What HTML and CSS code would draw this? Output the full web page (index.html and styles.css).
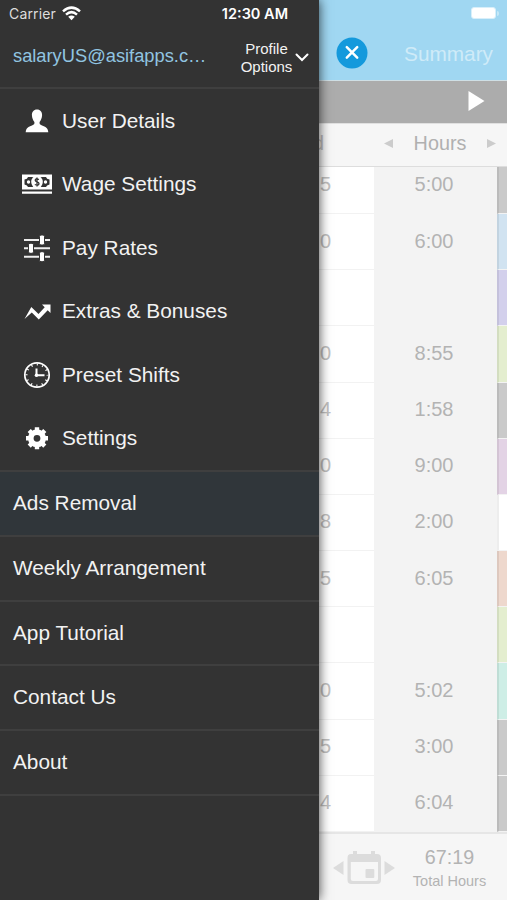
FILE: index.html
```
<!DOCTYPE html>
<html lang="en">
<head>
<meta charset="UTF-8">
<title>Salary - Menu</title>
<link rel="stylesheet" href="styles.css">
</head>
<body>
<!-- side menu -->
<nav class="drawer">
  <div class="status">
    <span class="carrier">Carrier</span>
    <svg class="wifi" width="19" height="15" viewBox="0 0 19 15"><g fill="none" stroke="#fff" stroke-width="2.5"><path d="M1 5.4Q9.500-2.200 18 5.400"/><path d="M4 8.600Q9.500 3.700 15 8.600"/></g><path d="M6.200 10.800Q9.500 8 12.800 10.800L9.500 14.200Z" fill="#fff"/></svg>
    <span class="time">12:30 AM</span>
  </div>
  <div class="profile">
    <span class="email">salaryUS@asifapps.c…</span>
    <span class="options">Profile<br>Options</span>
    <svg width="14" height="9" viewBox="0 0 14 9"><path d="M1.500 1.500L7 7L12.500 1.500" fill="none" stroke="#fff" stroke-width="2" stroke-linecap="round"/></svg>
  </div>
  <div class="menu">
    <div class="item">
      <svg width="30" height="30" viewBox="0 0 30 30"><path d="M15 3.500C11.600 3.500 9.800 6 9.900 9C10 12 11.200 14.500 12.400 16C12.700 18 12 18.700 10 19.400C6.500 20.700 4 21.500 3.700 26.300H26.300C26 21.500 23.500 20.700 20 19.400C18 18.700 17.300 18 17.600 16C18.800 14.500 20 12 20.100 9C20.200 6 18.400 3.500 15 3.500Z" fill="#fff"/></svg>
      <span>User Details</span>
    </div>
    <div class="item">
      <svg width="30" height="30" viewBox="0 0 30 30"><path d="M0 5.500H30V20.500H0ZM0 22.500H30V24.700H0Z" fill="#fff"/><path d="M6 8H24Q24.500 10 27.500 10.500V15.500Q24.500 16 24 18H6Q5.500 16 2.500 15.500V10.500Q5.500 10 6 8Z" fill="#333"/><ellipse cx="15" cy="13" rx="5.800" ry="6.400" fill="#fff"/><path d="M17 10.500Q13.300 8.800 13.200 11.300C13.200 13.200 17.100 12.500 17 14.800Q16.500 17 12.800 15.500M15 8.500V17.500" fill="none" stroke="#333" stroke-width="1.300"/><circle cx="6.500" cy="13" r="1.700" fill="#fff"/><circle cx="23.500" cy="13" r="1.700" fill="#fff"/></svg>
      <span>Wage Settings</span>
    </div>
    <div class="item">
      <svg width="30" height="30" viewBox="0 0 30 30"><path d="M2 7H28M2 15.300H28M2 23.700H28" stroke="#eee" stroke-width="2"/><g fill="#fff" stroke="#333"><rect x="17.500" y="2" width="5" height="10" rx="1.500"/><rect x="6.500" y="10.300" width="5" height="10" rx="1.500"/><rect x="17.500" y="18.700" width="5" height="10" rx="1.500"/></g></svg>
      <span>Pay Rates</span>
    </div>
    <div class="item">
      <svg width="30" height="30" viewBox="0 0 30 30"><path d="M2.500 23L9.300 11L16.500 18L22.700 11.200L20 8.500H28.500V17L25.700 14.200L16.800 23.500L9.800 16.500Z" fill="#fff"/></svg>
      <span>Extras &amp; Bonuses</span>
    </div>
    <div class="item">
      <svg width="30" height="30" viewBox="0 0 30 30"><circle cx="15" cy="15" r="12.200" fill="none" stroke="#fff" stroke-width="1.700"/><circle cx="15" cy="15" r="10.500" fill="none" stroke="#fff" stroke-width="2" stroke-dasharray="1.100 4.398" stroke-dashoffset=".55"/><path d="M14.500 8.500V15.300H22.500" fill="none" stroke="#fff" stroke-width="2"/><circle cx="14.500" cy="15.300" r="1.800" fill="#fff"/></svg>
      <span>Preset Shifts</span>
    </div>
    <div class="item">
      <svg width="30" height="30" viewBox="0 0 30 30"><circle cx="15" cy="15.300" r="6.200" fill="none" stroke="#fff" stroke-width="5.600"/><g stroke="#fff" stroke-width="4.400"><path d="M15 4.300V8M15 22.600V26.300M4 15.300H7.700M22.300 15.300H26M7.200 7.500L9.800 10.100M20.200 20.500L22.800 23.100M22.800 7.500L20.200 10.100M9.800 20.500L7.200 23.100"/></g></svg>
      <span>Settings</span>
    </div>
  </div>
  <div class="links">
    <div class="link active">Ads Removal</div>
    <div class="link">Weekly Arrangement</div>
    <div class="link">App Tutorial</div>
    <div class="link">Contact Us</div>
    <div class="link">About</div>
  </div>
</nav>

<!-- shifts page, pushed to the right -->
<main class="page">
  <header class="topbar">
    <div class="battery"><i></i><b></b></div>
    <div class="title">
      <svg width="32" height="32" viewBox="0 0 32 32"><circle cx="16" cy="16" r="15.500" fill="#1499dc"/><path d="M10.800 10.200L21.200 20.600M21.200 10.200L10.800 20.600" stroke="#fff" stroke-width="2.500" stroke-linecap="round"/></svg>
      <span>Summary</span>
    </div>
  </header>
  <div class="period">
    <svg width="17" height="20" viewBox="0 0 17 20"><path d="M.5 0L16.500 10L.5 20Z" fill="#fff"/></svg>
  </div>
  <div class="columns">
    <span class="end">d</span>
    <span class="hours">
      <svg width="9" height="9" viewBox="0 0 9 9"><path d="M9 0V9L0 4.500Z" fill="#ccc"/></svg>
      <em>Hours</em>
      <svg width="9" height="9" viewBox="0 0 9 9"><path d="M0 0V9L9 4.500Z" fill="#ccc"/></svg>
    </span>
  </div>
  <div class="rows">
    <div class="row"><span class="end">5</span><span class="hours">5:00</span><i class="tag gray"></i></div>
    <div class="row"><span class="end">0</span><span class="hours">6:00</span><i class="tag blue"></i></div>
    <div class="row"><span class="end"></span><span class="hours"></span><i class="tag violet"></i></div>
    <div class="row"><span class="end">0</span><span class="hours">8:55</span><i class="tag green"></i></div>
    <div class="row"><span class="end">4</span><span class="hours">1:58</span><i class="tag gray"></i></div>
    <div class="row"><span class="end">0</span><span class="hours">9:00</span><i class="tag pink"></i></div>
    <div class="row"><span class="end">8</span><span class="hours">2:00</span><i class="tag white"></i></div>
    <div class="row"><span class="end">5</span><span class="hours">6:05</span><i class="tag peach"></i></div>
    <div class="row"><span class="end"></span><span class="hours"></span><i class="tag green"></i></div>
    <div class="row"><span class="end">0</span><span class="hours">5:02</span><i class="tag mint"></i></div>
    <div class="row"><span class="end">5</span><span class="hours">3:00</span><i class="tag gray"></i></div>
    <div class="row"><span class="end">4</span><span class="hours">6:04</span><i class="tag gray"></i></div>
  </div>
  <footer class="total">
    <svg width="62" height="34" viewBox="0 0 62 34"><g fill="#dcdcdc"><path d="M10.500 10V24L0 17Z"/><path d="M51.500 10V24L62 17Z"/><path fill-rule="evenodd" d="M18 3H20V0H24V3H38V0H42V3H44Q48 3 48 7V29Q48 33 44 33H18.500Q14.500 33 14.500 29V7Q14.500 3 18 3ZM17.800 11V28Q17.800 30 19.800 30H43Q45 30 45 28V11Z"/><rect x="32.500" y="18" width="8.800" height="9" rx="1"/></g></svg>
    <div class="sum"><strong>67:19</strong><small>Total Hours</small></div>
  </footer>
</main>
</body>
</html>
```
FILE: styles.css
```
*{box-sizing:border-box;}
body{
  margin:0;
  width:507px;height:900px;
  display:flex;
  overflow:hidden;
  font-family:"Liberation Sans",Arial,sans-serif;
  background:#f6f6f6;
}
svg{display:block;flex:none;}

/* drawer */
.drawer{
  width:319px;height:900px;flex:none;
  background:#333;color:#f2f2f2;
  box-shadow:0 0 11px rgba(0,0,0,.75);
  z-index:1;
  white-space:nowrap;
}
.status{
  height:28px;padding:0 31px 0 9px;
  display:flex;align-items:center;
  font-family:Inter,sans-serif;font-size:14px;
}
.carrier{color:#ddd;letter-spacing:.15px;margin-top:-1px;}
.wifi{margin-left:6px;margin-top:-1px;}
.time{margin-left:auto;font-weight:600;font-size:14.5px;color:#fff;margin-top:-1px;}
.profile{
  height:61px;padding:0 9px 0 13px;
  display:flex;align-items:center;
  border-bottom:2px solid #3f3f3f;
}
.email{width:195px;font-size:18.300px;color:#91c5e1;padding-bottom:3px;}
.options{margin-left:20px;width:77px;margin-right:-10px;text-align:center;font-size:15px;line-height:17.500px;}
.profile svg{margin-top:-1px;}
.menu{height:381px;display:grid;grid-template-rows:repeat(6,63.5px);}
.item{display:flex;align-items:center;gap:10px;padding-left:22px;font-size:20.8px;}
.link{
  height:64.8px;line-height:62.500px;padding-left:13px;
  border-top:2px solid #3f3f3f;font-size:20.8px;
}
.link.active{background:#30363a;}
.link:last-child{height:66.800px;border-bottom:2px solid #3f3f3f;}

/* page behind */
.page{width:188px;height:900px;display:flex;flex-direction:column;color:#b3b3b3;overflow:hidden;}
.topbar{height:80px;flex:none;background:#a0d7f2;}
.battery{height:26px;padding:0 8px 0 0;display:flex;justify-content:flex-end;align-items:center;gap:1px;}
.battery i{width:25px;height:12px;border-radius:3px;background:#fff;border:1px solid #d8effa;}
.battery b{width:2px;height:5px;border-radius:0 2px 2px 0;background:#c5e8f7;}
.title{height:54px;padding:0 14px 0 17px;display:flex;align-items:center;justify-content:space-between;font-size:20.800px;color:#cfebf8;}
.title span{padding-top:2px;}
.period{
  height:44px;flex:none;background:#acacac;
  border-top:1px solid #cfdfe5;border-bottom:1px solid #e0e0e0;
  display:flex;align-items:center;justify-content:flex-end;padding:0 22px 2px 0;
}
.columns{height:43px;flex:none;display:flex;background:#f6f6f6;border-bottom:1px solid #ddd;font-size:19.800px;padding-bottom:3px;}
.columns .end,.columns .hours{background:none;border:0;}
.columns .end{padding-right:50px;}
.columns .hours{width:133px;padding:0 11px 0 10px;justify-content:space-between;}
.columns em{font-style:normal;color:#b0b0b0;}
.rows{height:665px;flex:none;display:flex;flex-direction:column;justify-content:flex-end;overflow:hidden;font-size:20px;}
.row{height:56.200px;flex:none;display:flex;}
.end{width:55px;flex:none;padding-right:43px;display:flex;align-items:center;justify-content:flex-end;background:#fff;border-bottom:1.500px solid #f2f2f2;color:#c0c0c0;}
.hours{width:123px;flex:none;display:flex;align-items:center;justify-content:center;background:#f3f3f3;}
.row .hours{padding:0 3px 2px 0;}
.row .end{padding-bottom:1px;}
.tag{width:10px;border-left:2px solid rgba(0,0,0,.07);border-bottom:1px solid #f3f3f3;}
.gray{background:#cacaca;}
.blue{background:#d1e3f1;}
.violet{background:#d3d0ec;}
.green{background:#e4eecf;}
.pink{background:#e3d3e5;}
.white{background:#fff;}
.peach{background:#eed8cd;}
.mint{background:#ceeee6;}
.total{flex:1;display:flex;background:#f6f6f6;border-top:2px solid #e6e6e6;padding:17px 0 0 14px;}
.sum{margin-left:14px;width:81px;display:flex;flex-direction:column;align-items:center;margin-top:-6px;white-space:nowrap;}
.sum strong{font-weight:normal;font-size:19.700px;line-height:24px;}
.sum small{font-size:14.500px;line-height:24px;}
```
